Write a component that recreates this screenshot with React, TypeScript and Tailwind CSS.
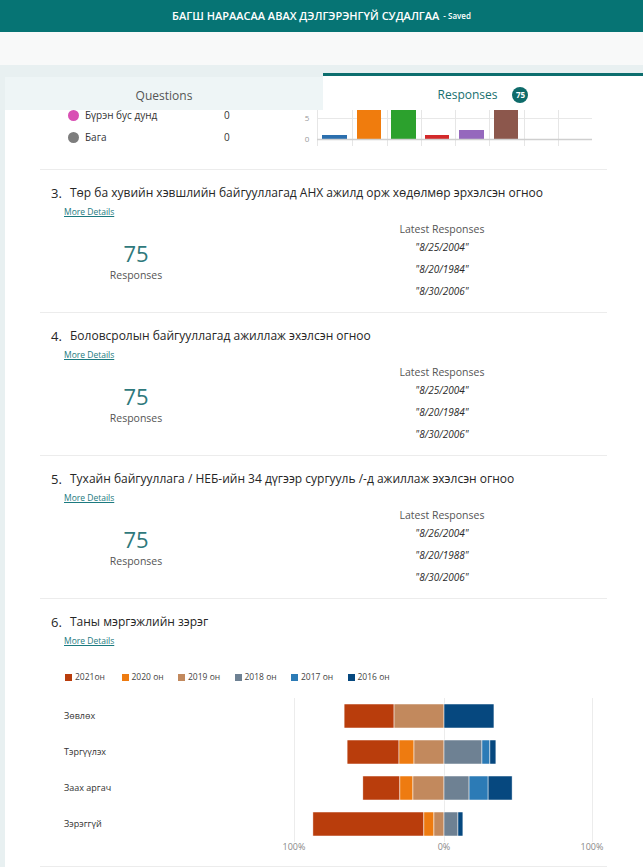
import React from "react"

const YEARS = [
  { label: "2021он", color: "#b93d0c" },
  { label: "2020 он", color: "#ee7b10" },
  { label: "2019 он", color: "#c2895d" },
  { label: "2018 он", color: "#6e8193" },
  { label: "2017 он", color: "#2c7bb6" },
  { label: "2016 он", color: "#06487f" },
]

// percent of responses per year, first three drawn to the left of 0%
const ROWS = [
  { label: "Зөвлөх", values: [33.3, 0, 33.3, 0, 0, 33.3] },
  { label: "Тэргүүлэх", values: [34.6, 10, 20, 25.3, 5.3, 4] },
  { label: "Заах аргач", values: [24.7, 8.7, 20.7, 16.7, 12.7, 16] },
  { label: "Зэрэггүй", values: [74, 6.7, 6.7, 9.3, 0, 3.3] },
]

const DATE_QUESTIONS = [
  {
    n: 3,
    title: "Төр ба хувийн хэвшлийн байгууллагад АНХ ажилд орж хөдөлмөр эрхэлсэн огноо",
    dates: ["8/25/2004", "8/20/1984", "8/30/2006"],
  },
  {
    n: 4,
    title: "Боловсролын байгууллагад ажиллаж эхэлсэн огноо",
    dates: ["8/25/2004", "8/20/1984", "8/30/2006"],
  },
  {
    n: 5,
    title: "Тухайн байгууллага / НЕБ-ийн 34 дүгээр сургууль /-д ажиллаж эхэлсэн огноо",
    dates: ["8/26/2004", "8/20/1988", "8/30/2006"],
  },
]

const LEGEND = [
  { label: "Бүрэн бус дунд", color: "#d950b4" },
  { label: "Бага", color: "#7d7d7d" },
]

const QuestionTitle = ({ n, title }: { n: number; title: string }) => (
  <>
    <h3 className="flex pl-[11px] text-[12px] leading-[18px] text-[#262626]">
      <span className="w-[19px] text-[13px]">{n}.</span>
      <span>{title}</span>
    </h3>
    <a className="mt-[3px] ml-[24px] block w-fit text-[8.5px] leading-[14px] text-[#1c7a80] underline">More Details</a>
  </>
)

const DateQuestion = ({ n, title, dates }: { n: number; title: string; dates: string[] }) => (
  <section className="border-t border-[#ececec] pt-[14px] pb-[10px]">
    <QuestionTitle n={n} title={title} />
    <div className="mt-[3px] flex">
      <div className="w-[192px] pt-[17px] text-center">
        <div className="text-[22px] leading-[28px] text-[#2f797c]">75</div>
        <div className="text-[10.5px] leading-[16px] text-[#555]">Responses</div>
      </div>
      <div className="ml-[120px] w-[180px] text-center">
        <div className="text-[10.5px] leading-[14px] text-[#555]">Latest Responses</div>
        {dates.map((d) => (
          <div key={d} className="text-[10px] italic leading-[22px] text-[#2a2a2a]">
            "{d}"
          </div>
        ))}
      </div>
    </div>
  </section>
)

const SmallBars = () => (
  <svg width="300" height="59" className="block">
    <text x="7" y="11" fontSize="8" fill="#999" textAnchor="middle">5</text>
    <text x="7" y="32" fontSize="8" fill="#999" textAnchor="middle">0</text>
    <line x1="17" x2="292" y1="8.5" y2="8.5" stroke="#e8e8e8" />
    {[17, 52, 87, 121, 155, 189, 224, 258].map((x) => (
      <line key={x} x1={x + 0.5} x2={x + 0.5} y1="0" y2="36" stroke="#e6e6e6" />
    ))}
    <rect x="22" y="25" width="25" height="4" fill="#2b6fae" />
    <rect x="57" y="0" width="24" height="29" fill="#f07c0d" />
    <rect x="91" y="0" width="25" height="29" fill="#2ca12d" />
    <rect x="125" y="25" width="24" height="4" fill="#d3292a" />
    <rect x="159" y="20" width="25" height="9" fill="#9568bd" />
    <rect x="194" y="0" width="24" height="29" fill="#8c574c" />
    <line x1="17" x2="292" y1="29.5" y2="29.5" stroke="#cfcfcf" strokeWidth="1.5" />
  </svg>
)

const StackedChart = () => {
  const zero = 190
  const scale = 1.5
  return (
    <div className="mt-[14px] flex">
      <div className="w-[214px] pl-[24px]">
        {ROWS.map((r) => (
          <div key={r.label} className="flex h-[36px] items-center text-[9px] text-[#333]">
            {r.label}
          </div>
        ))}
      </div>
      <svg width="353" height="158" className="block">
        {[40, 190, 338].map((x) => (
          <line key={x} x1={x + 0.5} x2={x + 0.5} y1="0" y2="144" stroke="#ececec" />
        ))}
        {ROWS.map((r, i) => {
          const left = r.values.slice(0, 3).reduce((a, b) => a + b, 0)
          let x = zero - left * scale
          return r.values.map((v, j) => {
            const w = v * scale
            const rect = (
              <rect
                key={`${i}-${j}`}
                x={x}
                y={6 + i * 36}
                width={w}
                height="24"
                fill={YEARS[j].color}
                stroke="#fff"
                strokeWidth="0.5"
              />
            )
            x += w
            return v > 0 ? rect : null
          })
        })}
        <text x="40" y="152" fontSize="9" fill="#888" textAnchor="middle">100%</text>
        <text x="190" y="152" fontSize="9" fill="#888" textAnchor="middle">0%</text>
        <text x="338" y="152" fontSize="9" fill="#888" textAnchor="middle">100%</text>
      </svg>
    </div>
  )
}

export default function App() {
  return (
    <div className="h-[868px] overflow-hidden bg-white font-['Open_Sans','Noto_Sans',sans-serif]">
      <header className="flex h-[32px] items-center justify-center bg-[#067474] text-white">
        <span className="text-[11px] font-semibold">БАГШ НАРААСАА АВАХ ДЭЛГЭРЭНГҮЙ СУДАЛГАА</span>
        <span className="ml-[4px] text-[8px] font-semibold">- Saved</span>
      </header>
      <div className="h-[33px] bg-[#f8f9f9]" />

      <div className="bg-[#e8f0f1] pt-[8px] pl-[5px]">
        <div className="flex h-[37px]">
          <div className="mt-[4px] flex w-[318px] items-center justify-center bg-[#eef5f6] pt-[4px] text-[12px] text-[#555]">
            Questions
          </div>
          <div className="flex flex-1 items-center justify-center border-t-[3px] border-[#0c6e6e] bg-white pt-[3px]">
            <span className="text-[12px] text-[#17706f]">Responses</span>
            <span className="ml-[15px] flex h-[16px] w-[16px] items-center justify-center rounded-full bg-[#0e6b6a] text-[8px] font-bold text-white">
              75
            </span>
          </div>
        </div>

        <div className="bg-white">
          <div className="ml-[35px] w-[567px]">
            <div className="flex h-[59px]">
              <div className="flex w-[260px] flex-col gap-[12px] pl-[28px]">
                {LEGEND.map((l) => (
                  <div key={l.label} className="flex h-[10px] items-center text-[10px] leading-[10px] text-[#333]">
                    <span className="h-[11px] w-[11px] shrink-0 rounded-full" style={{ background: l.color }} />
                    <span className="ml-[6px] w-[139px]">{l.label}</span>
                    <span>0</span>
                  </div>
                ))}
              </div>
              <SmallBars />
            </div>

            {DATE_QUESTIONS.map((q) => (
              <DateQuestion key={q.n} {...q} />
            ))}

            <section className="border-t border-[#ececec] pt-[14px] pb-[10px]">
              <QuestionTitle n={6} title="Таны мэргэжлийн зэрэг" />
              <div className="mt-[22px] flex h-[14px] items-center pl-[25px]">
                {YEARS.map((y) => (
                  <div key={y.label} className="flex w-[56.5px] items-center text-[8.5px] text-[#444]">
                    <span className="h-[7px] w-[7px]" style={{ background: y.color }} />
                    <span className="ml-[3px]">{y.label}</span>
                  </div>
                ))}
              </div>
              <StackedChart />
            </section>
            <div className="border-t border-[#ececec]" />
          </div>
        </div>
      </div>
    </div>
  )
}
